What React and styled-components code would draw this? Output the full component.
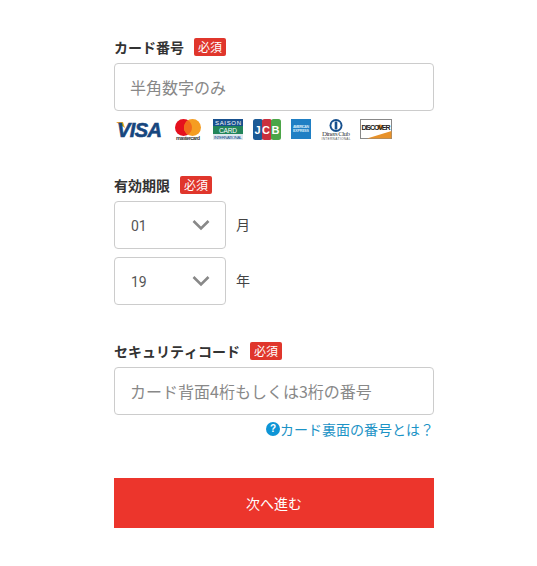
import styled, { createGlobalStyle } from "styled-components";

const GlobalStyle = createGlobalStyle`
  html, body {
    margin: 0;
    background: #fff;
  }
  body {
    font-family: "Noto Sans CJK JP", "Noto Sans", sans-serif;
    color: #333;
  }
`;

const Page = styled.div`
  width: 537px;
  height: 566px;
  padding: 38px 0 0 114px;
  box-sizing: border-box;
  overflow: hidden;
`;

const Form = styled.form`
  width: 320px;
  display: flex;
  flex-direction: column;
`;

const Section = styled.section`
  margin-bottom: ${(p) => p.$gap || 0}px;
`;

const LabelRow = styled.div`
  display: flex;
  align-items: center;
  gap: 10px;
  height: 18px;
  margin-bottom: 7px;
`;

const Label = styled.label`
  font-size: 14px;
  font-weight: 700;
  font-kerning: none;
  line-height: 18px;
  color: #333;
`;

const Badge = styled.span`
  width: 32px;
  height: 18px;
  border-radius: 2px;
  background: #e0362c;
  color: #fff;
  font-size: 12px;
  line-height: 18px;
  text-align: center;
`;

const Input = styled.input`
  display: block;
  width: 100%;
  height: 48px;
  box-sizing: border-box;
  padding: 0 15px;
  border: 1px solid #ccc;
  border-radius: 4px;
  background: #fff;
  font-family: inherit;
  font-size: 16px;
  color: #333;
  outline: none;

  &::placeholder {
    color: #888;
    opacity: 1;
  }
`;

const Brands = styled.div`
  display: flex;
  align-items: center;
  height: 24px;
  margin-top: 6px;
`;

const Brand = styled.svg`
  display: block;
  flex: none;
  overflow: visible;
  margin-left: ${(p) => p.$left}px;
`;

const SelectRow = styled.div`
  display: flex;
  align-items: center;
  gap: 10px;
  margin-bottom: 8px;

  &:last-child {
    margin-bottom: 0;
  }
`;

const SelectBox = styled.div`
  width: 112px;
  height: 48px;
  box-sizing: border-box;
  padding: 0 15px;
  border: 1px solid #ccc;
  border-radius: 4px;
  display: flex;
  align-items: center;
  justify-content: space-between;
`;

const SelectValue = styled.span`
  padding: 2px 0 0 1px;
  font-family: "Roboto", "Noto Sans", sans-serif;
  font-size: 14px;
  color: #555;
`;

const Unit = styled.span`
  padding-bottom: 2px;
  font-size: 14px;
  color: #444;
`;

const HelpRow = styled.div`
  display: flex;
  justify-content: flex-end;
  margin-top: 5px;
`;

const HelpLink = styled.a`
  display: flex;
  align-items: center;
  height: 18px;
  font-size: 14px;
  line-height: 18px;
  color: #1c93c6;
  text-decoration: none;
`;

const HelpDot = styled.span`
  width: 14px;
  height: 14px;
  border-radius: 50%;
  background: #0e95d6;
  color: #fff;
  font-size: 10px;
  font-weight: 700;
  line-height: 14px;
  text-align: center;
  font-family: "Liberation Sans", sans-serif;
`;

const Submit = styled.button`
  display: block;
  width: 100%;
  height: 50px;
  margin-top: 40px;
  border: 0;
  background: #ec352c;
  color: #fff;
  font-family: inherit;
  font-size: 14px;
  cursor: pointer;
`;

const Chevron = () => (
  <svg width="18" height="12" viewBox="0 0 18 12">
    <path d="M1.5 2 L9 9.5 L16.5 2" fill="none" stroke="#888" strokeWidth="2.6" />
  </svg>
);

const Visa = () => (
  <Brand $left={2} width="47" height="18" viewBox="0 0 47 18">
    <path d="M0 2h7l2 6z" fill="#e9a326" />
    <text x="1" y="16.5" fontFamily="Liberation Sans" fontSize="20" fontWeight="700" fontStyle="italic" fill="#17467e" stroke="#17467e" strokeWidth="0.6" textLength="45">VISA</text>
  </Brand>
);

const Mastercard = () => (
  <Brand $left={12} width="26" height="21" viewBox="0 0 26 21">
    <circle cx="8.5" cy="8.5" r="8.5" fill="#e5101d" />
    <circle cx="17.5" cy="8.5" r="8.5" fill="#f59d22" />
    <path d="M13 1.3a8.5 8.5 0 0 1 0 14.4a8.5 8.5 0 0 1 0-14.4z" fill="#f26a1b" />
    <text x="1" y="21" fontFamily="Liberation Sans" fontSize="5.4" fontWeight="700" fill="#333" textLength="24">mastercard</text>
  </Brand>
);

const Saison = () => (
  <Brand $left={12} width="30" height="21" viewBox="0 0 30 21">
    <rect width="30" height="21" fill="#dfe8ee" />
    <rect width="30" height="7" fill="#17508e" />
    <rect y="7" width="30" height="8" fill="#23855a" />
    <text x="15" y="6" textAnchor="middle" fontFamily="Liberation Sans" fontSize="6" fill="#fff" textLength="26">SAISON</text>
    <text x="15" y="13.5" textAnchor="middle" fontFamily="Liberation Sans" fontSize="6.5" fill="#fff" textLength="18">CARD</text>
    <text x="15" y="20" textAnchor="middle" fontFamily="Liberation Sans" fontSize="4.4" fill="#17508e" textLength="28">INTERNATIONAL</text>
  </Brand>
);

const Jcb = () => (
  <Brand $left={10} width="28" height="21" viewBox="0 0 28 21">
    <rect width="10" height="21" rx="2.5" fill="#1b5a96" />
    <rect x="9" width="10" height="21" rx="2.5" fill="#c9303e" />
    <rect x="18" width="10" height="21" rx="2.5" fill="#4ba548" />
    <text x="14" y="15" textAnchor="middle" fontFamily="Liberation Sans" fontSize="11" fontWeight="700" fill="#fff" textLength="25">JCB</text>
  </Brand>
);

const Amex = () => (
  <Brand $left={10} width="20" height="20" viewBox="0 0 20 20">
    <rect width="20" height="20" fill="#1f7fc4" />
    <text x="10" y="9" textAnchor="middle" fontFamily="Liberation Sans" fontSize="3.6" fontWeight="700" fill="#d8ecf8" textLength="16">AMERICAN</text>
    <text x="10" y="13" textAnchor="middle" fontFamily="Liberation Sans" fontSize="3.6" fontWeight="700" fill="#d8ecf8" textLength="16">EXPRESS</text>
  </Brand>
);

const Diners = () => (
  <Brand $left={10} width="30" height="21" viewBox="0 0 30 21">
    <circle cx="15" cy="6.5" r="6.5" fill="#17508e" />
    <circle cx="15" cy="6.5" r="4.6" fill="#fff" />
    <rect x="13.7" y="2.5" width="2.6" height="8" fill="#17508e" />
    <text x="15" y="17" textAnchor="middle" fontFamily="Liberation Serif" fontSize="7" fill="#444" textLength="28">Diners Club</text>
    <text x="15" y="20.5" textAnchor="middle" fontFamily="Liberation Sans" fontSize="3.2" fill="#555" textLength="29">INTERNATIONAL</text>
  </Brand>
);

const Discover = () => (
  <Brand $left={9} width="32" height="20" viewBox="0 0 32 20">
    <rect x="0.5" y="0.5" width="31" height="19" fill="#fff" stroke="#888" />
    <path d="M7 19.5L31.5 12v7.5z" fill="#e8922a" />
    <circle cx="20" cy="8" r="2.6" fill="#e8922a" />
    <text x="16" y="10.5" textAnchor="middle" fontFamily="Liberation Sans" fontSize="7" fontWeight="700" fill="#222" textLength="29">DISCOVER</text>
  </Brand>
);

export default function App() {
  return (
    <>
      <GlobalStyle />
      <Page>
        <Form>
          <Section $gap={35}>
            <LabelRow>
              <Label>カード番号</Label>
              <Badge>必須</Badge>
            </LabelRow>
            <Input placeholder="半角数字のみ" />
            <Brands>
              <Visa />
              <Mastercard />
              <Saison />
              <Jcb />
              <Amex />
              <Diners />
              <Discover />
            </Brands>
          </Section>

          <Section $gap={37}>
            <LabelRow>
              <Label>有効期限</Label>
              <Badge>必須</Badge>
            </LabelRow>
            <SelectRow>
              <SelectBox>
                <SelectValue>01</SelectValue>
                <Chevron />
              </SelectBox>
              <Unit>月</Unit>
            </SelectRow>
            <SelectRow>
              <SelectBox>
                <SelectValue>19</SelectValue>
                <Chevron />
              </SelectBox>
              <Unit>年</Unit>
            </SelectRow>
          </Section>

          <Section>
            <LabelRow>
              <Label>セキュリティコード</Label>
              <Badge>必須</Badge>
            </LabelRow>
            <Input placeholder="カード背面4桁もしくは3桁の番号" />
            <HelpRow>
              <HelpLink href="#">
                <HelpDot>?</HelpDot>
                カード裏面の番号とは？
              </HelpLink>
            </HelpRow>
          </Section>

          <Submit type="button">次へ進む</Submit>
        </Form>
      </Page>
    </>
  );
}
